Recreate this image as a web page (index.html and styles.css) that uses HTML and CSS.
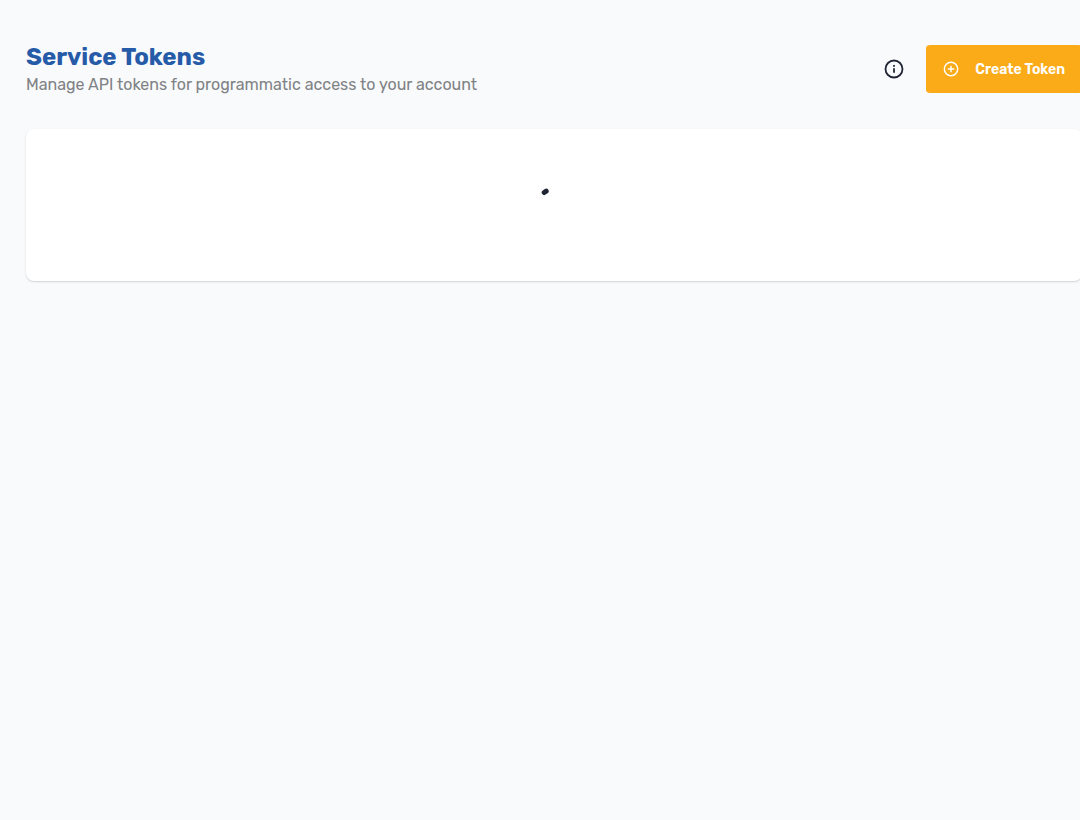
FILE: index.html
```html
<!DOCTYPE html>
<html lang="en">
<head>
  <meta charset="UTF-8">
  <meta name="viewport" content="width=device-width, initial-scale=1">
  <title>Service Tokens</title>
  <link rel="stylesheet" href="styles.css">
</head>
<body>
  <main class="page">
    <header class="page-header">
      <div class="page-heading">
        <h1>Service Tokens</h1>
        <p>Manage API tokens for programmatic access to your account</p>
      </div>
      <div class="page-actions">
        <button type="button" class="info-btn" aria-label="Info">
          <svg width="24" height="24" viewBox="0 0 24 24" fill="none" stroke="currentColor" stroke-width="1.8">
            <circle cx="12" cy="12" r="8.5"/>
            <path d="M12 11.2v4.6M12 8v1.8"/>
          </svg>
        </button>
        <button type="button" class="create-btn">
          <svg width="18" height="18" viewBox="0 0 18 18" fill="none" stroke="currentColor" stroke-width="1.4">
            <circle cx="9" cy="9" r="6.7"/>
            <path d="M9 5.8v6.4M5.8 9h6.4"/>
          </svg>
          <span>Create Token</span>
        </button>
      </div>
    </header>

    <section class="card">
      <div class="spinner" role="progressbar" aria-label="Loading">
        <svg width="40" height="40" viewBox="0 0 40 40" fill="none">
          <path d="M10.2 7.5L12.2 6.2" stroke="currentColor" stroke-width="5" stroke-linecap="round"/>
        </svg>
      </div>
    </section>
  </main>
</body>
</html>
```
FILE: styles.css
```css
* { margin: 0; padding: 0; box-sizing: border-box; }

:root {
  --bg-color: #f9fafc;
  --title-color: #265ba8;
  --muted-color: #7f8285;
  --dark-color: #202533;
  --accent-color: #fbab18;
}

body {
  background-color: var(--bg-color);
  color: var(--dark-color);
  font-family: Rubik, Inter, sans-serif;
  overflow-x: hidden;
}

/* content runs slightly past the right edge */
.page {
  margin-right: -2px;
  padding: 41px 0 24px 26px;
}

.page-header {
  display: flex;
  align-items: center;
  justify-content: space-between;
  margin-bottom: 32px;
}

.page-heading h1 {
  font-size: 24px;
  font-weight: 700;
  line-height: 32px;
  color: var(--title-color);
}

.page-heading p {
  font-size: 16px;
  line-height: 24px;
  color: var(--muted-color);
}

.page-actions {
  display: flex;
  align-items: center;
  gap: 12px;
}

.info-btn {
  display: flex;
  padding: 8px;
  border: none;
  background: none;
  color: var(--dark-color);
  cursor: pointer;
}

.create-btn {
  display: flex;
  align-items: center;
  gap: 15px;
  height: 48px;
  padding: 0 17px 0 16px;
  border: none;
  border-radius: 4px;
  background-color: var(--accent-color);
  color: #fff;
  font-family: inherit;
  font-size: 14px;
  font-weight: 600;
  white-space: nowrap;
  cursor: pointer;
}

.card {
  display: flex;
  justify-content: center;
  padding: 56px 24px;
  border-radius: 8px;
  background-color: #fff;
  box-shadow: 0 1px 2px rgba(0, 0, 0, 0.16);
}

.spinner {
  display: flex;
}
```
